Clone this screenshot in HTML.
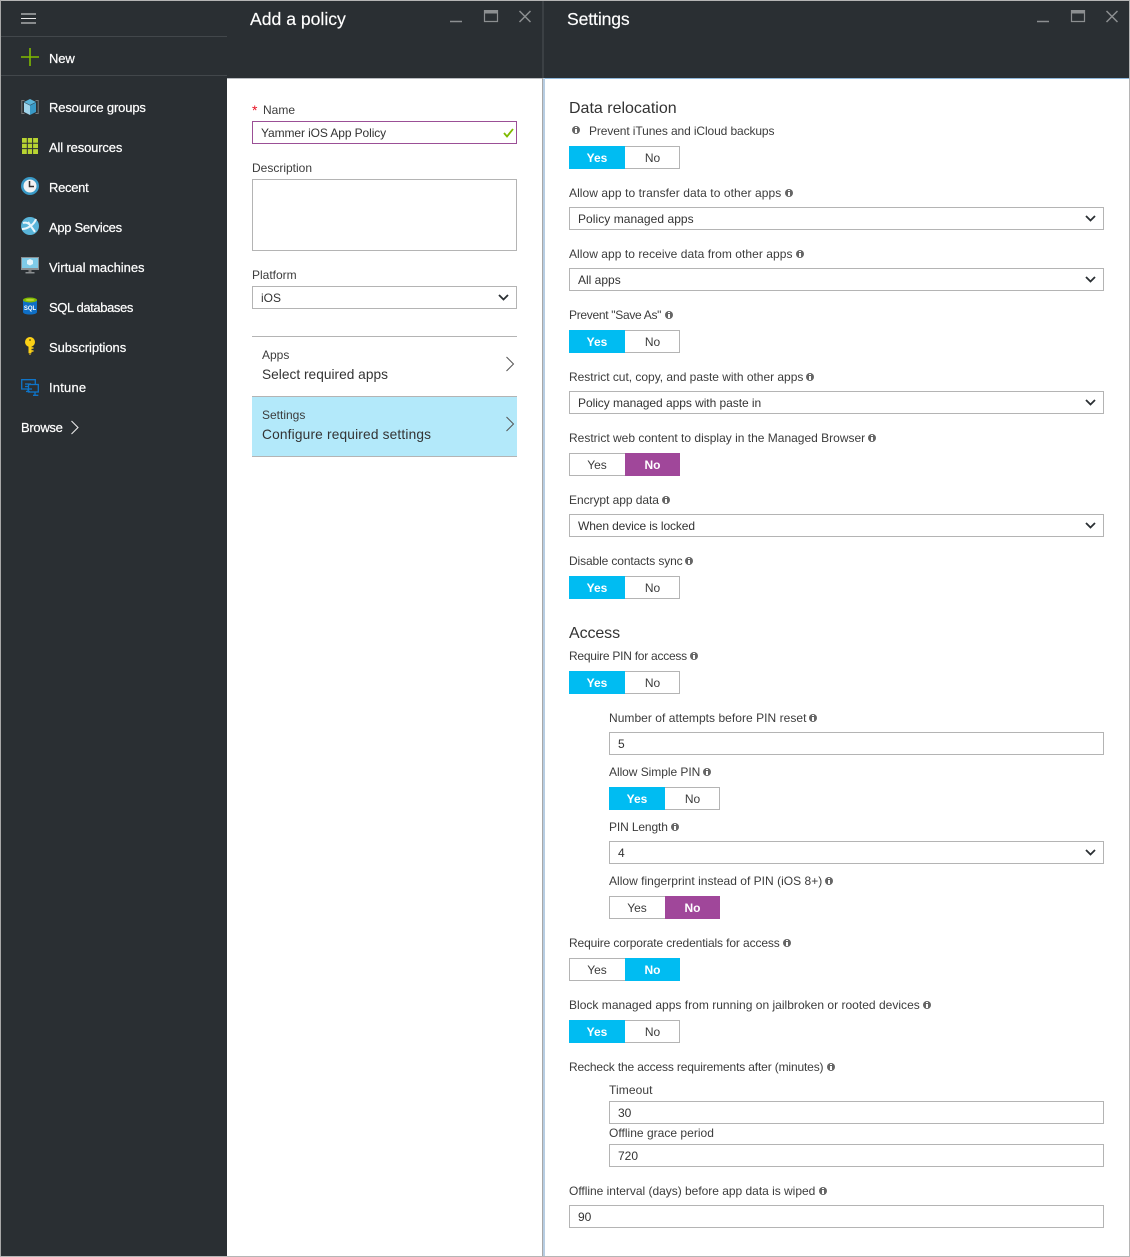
<!DOCTYPE html>
<html><head><meta charset="utf-8"><title>Settings</title>
<style>
html,body{margin:0;padding:0;background:#fff}
#p{position:relative;width:1130px;height:1257px;overflow:hidden;background:#fff;font-family:"Liberation Sans",Arial,sans-serif;font-size:12px;color:#3c3c3c}
#p div,#p span,#p svg{position:absolute}
.t{white-space:nowrap;line-height:16px}
.b{background:#2a2f33}
.n{color:#fff;font-size:13px;left:49px;-webkit-text-stroke:.2px #fff;letter-spacing:-.15px}
.h{color:#fff;font-size:17.6px;line-height:22px;white-space:nowrap;top:8px;-webkit-text-stroke:.15px #fff}
.s{color:#333;font-size:16px;line-height:20px;left:569px;white-space:nowrap}
.box{box-sizing:border-box;border:1px solid #b4b4b4;background:#fff;height:23px;line-height:23px;padding-left:8px;color:#333;white-space:nowrap}
.f1{left:569px;width:535px}.f2{left:609px;width:495px}
.tg{width:111px;height:23px;box-sizing:border-box;border:1px solid #b4b4b4;background:#fff;text-align:center}
.tg span{top:-1px;height:23px;line-height:25px;color:#3c3c3c}
.tg .a{left:-1px;width:56px}.tg .c{left:55px;width:55px}
.on{background:#00bcf2;color:#fff!important;font-weight:bold}
.pu{background:#a0479a;color:#fff!important;font-weight:bold}
.i{width:8px;height:8px;border-radius:50%;background:#666}
.i:before{content:"";position:absolute;left:3px;top:1px;width:2px;height:1px;background:#fff}
.i:after{content:"";position:absolute;left:3px;top:3px;width:2px;height:4px;background:#fff}
</style></head><body><div id="p">

<!-- dark regions -->
<div class="b" style="left:0;top:0;width:227px;height:1257px"></div>
<div class="b" style="left:227px;top:0;width:903px;height:78px"></div>
<div style="left:0;top:0;width:1130px;height:1px;background:#b5b5b5"></div>
<div style="left:0;top:0;width:1px;height:1257px;background:#a8a8a8"></div>
<div style="left:1129px;top:0;width:1px;height:1257px;background:#b5b5b5"></div>
<div style="left:0;top:1256px;width:1130px;height:1px;background:#b5b5b5"></div>
<div style="left:227px;top:78px;width:316px;height:1px;background:#b8bcc0"></div>
<div style="left:544px;top:78px;width:585px;height:1px;background:#8fb8dc"></div>
<div style="left:542px;top:1px;width:2px;height:77px;background:#3b4044"></div>
<div style="left:542px;top:78px;width:1px;height:1178px;background:#a8a8a8"></div>
<div style="left:543px;top:78px;width:2px;height:1178px;background:#b7cde2"></div>

<!-- sidebar -->
<div style="left:1px;top:36px;width:226px;height:1px;background:#42474b"></div>
<div style="left:1px;top:75px;width:226px;height:1px;background:#42474b"></div>
<svg style="left:21px;top:13px" width="15" height="11"><path d="M0 1h15M0 5.500h15M0 10h15" stroke="#e8e8e8" stroke-width="1"/></svg>
<svg style="left:21px;top:48px" width="18" height="18"><path d="M9 0v18M0 9h18" stroke="#7fba00" stroke-width="1.600"/></svg>
<div class="t n" style="top:51px">New</div>
<div class="t n" style="top:100px">Resource groups</div>
<div class="t n" style="top:140px">All resources</div>
<div class="t n" style="top:180px;letter-spacing:-.3px">Recent</div>
<div class="t n" style="top:220px;letter-spacing:-.32px">App Services</div>
<div class="t n" style="top:260px;letter-spacing:-.02px">Virtual machines</div>
<div class="t n" style="top:300px;letter-spacing:-.4px">SQL databases</div>
<div class="t n" style="top:340px;letter-spacing:-.07px">Subscriptions</div>
<div class="t n" style="top:380px;letter-spacing:.2px">Intune</div>
<div class="t n" style="top:420px;left:21px;letter-spacing:-.3px">Browse</div>
<svg style="left:70px;top:420px" width="10" height="15"><path d="M1.500 1l6.500 6.500-6.500 6.500" fill="none" stroke="#e8e8e8" stroke-width="1.100"/></svg>

<svg style="left:21px;top:98px" width="18" height="18"><path d="M3.500 2.500H.8v13h2.700M14.500 2.500h2.700v13h-2.700" fill="none" stroke="#777" stroke-width="1"/><path d="M9 1l6 3-6 3-6-3z" fill="#59b4d9"/><path d="M3 4.500l6 3V17l-6-3z" fill="#a0d4ea"/><path d="M15 4.500l-6 3V17l6-3z" fill="#3999c6"/></svg>
<svg style="left:22px;top:138px" width="16" height="16"><rect width="16" height="16" fill="#b8d432"/><path d="M5.300 0v16M10.600 0v16M0 5.300h16M0 10.600h16" stroke="#2a2f33" stroke-width="1"/></svg>
<svg style="left:21px;top:177px" width="18" height="18"><circle cx="9" cy="9" r="9" fill="#3999c6"/><circle cx="9" cy="9" r="6.500" fill="#f2f2f2"/><path d="M8.500 4v5.500H13" fill="none" stroke="#333" stroke-width="1.500"/></svg>
<svg style="left:21px;top:217px" width="18" height="18"><circle cx="9" cy="9" r="9" fill="#59b4d9"/><path d="M1 12C6 12 13 8 15 2M7 5l7 10M2 6c3-1 5 0 7 2" fill="none" stroke="#e8f5fb" stroke-width="2"/></svg>
<svg style="left:21px;top:257px" width="18" height="18"><rect width="18" height="13" fill="#8a8f92"/><rect x="1" y="1" width="16" height="10" fill="#7fcbe8"/><path d="M9 2l3 1.500v3.500L9 8.500 6 7V3.500z" fill="#e4f4fb"/><rect x="7.500" y="13" width="3" height="2" fill="#777"/><rect x="4.500" y="15" width="9" height="1.500" fill="#8a8f92"/></svg>
<svg style="left:23px;top:297px" width="14" height="18"><path d="M0 3v12c0 1.500 3 2.500 7 2.500s7-1 7-2.500V3z" fill="#0f6fc6"/><ellipse cx="7" cy="3" rx="7" ry="2.500" fill="#7fba00"/><ellipse cx="7" cy="3" rx="4.500" ry="1.300" fill="#b8d432"/><text x="7" y="13" font-size="6" font-weight="bold" text-anchor="middle" fill="#fff" font-family="Liberation Sans, sans-serif">SQL</text></svg>
<svg style="left:24px;top:337px" width="12" height="18"><circle cx="6" cy="5" r="5" fill="#fcd116"/><rect x="4.500" y="8" width="3" height="8" fill="#fcd116"/><path d="M7.500 11h2M7.500 14h2" stroke="#fcd116" stroke-width="1.500"/><path d="M4.500 16.500L6 18l1.500-1.500z" fill="#fcd116"/><circle cx="6" cy="3" r="1" fill="#7a6a10"/></svg>
<svg style="left:21px;top:379px" width="18" height="17" fill="none" stroke="#0f74c8" stroke-width="1.300"><path d="M11 10H.7V.7h13.600V5M5 12.500h4M7 10v2.500"/><rect x="7.500" y="5.500" width="9.800" height="7.500"/><path d="M12 16.300h5.300M14 13v3M4 5h6M4 7.500h3"/></svg>

<!-- window controls -->
<svg style="left:450px;top:10px" width="81" height="14" fill="none" stroke="#8c8f91"><path d="M0 11.500h12" stroke-width="1.500"/><path d="M34.500.5h13v11h-13z" stroke-width="1.200"/><rect x="34" width="14" height="3.500" fill="#8c8f91" stroke="none"/><path d="M69.500 1l11 11M80.500 1l-11 11" stroke-width="1.500"/></svg>
<svg style="left:1037px;top:10px" width="81" height="14" fill="none" stroke="#8c8f91"><path d="M0 11.500h12" stroke-width="1.500"/><path d="M34.500.5h13v11h-13z" stroke-width="1.200"/><rect x="34" width="14" height="3.500" fill="#8c8f91" stroke="none"/><path d="M69.500 1l11 11M80.500 1l-11 11" stroke-width="1.500"/></svg>

<div class="h" style="left:250px">Add a policy</div>
<div class="h" style="left:567px;letter-spacing:-.12px">Settings</div>

<!-- add a policy panel -->
<div class="t" style="left:252px;top:102px;color:#e81123;font-size:14px">*</div>
<div class="t" style="left:263px;top:102px">Name</div>
<div class="box" style="left:252px;top:121px;width:265px;border-color:#9b4f96;letter-spacing:-.1px">Yammer iOS App Policy</div>
<svg style="left:503px;top:128px" width="11" height="10"><path d="M1 5l3 3.500L10 1" fill="none" stroke="#7fba00" stroke-width="1.800"/></svg>
<div class="t" style="left:252px;top:160px">Description</div>
<div class="box" style="left:252px;top:179px;width:265px;height:72px"></div>
<div class="t" style="left:252px;top:267px">Platform</div>
<div class="box" style="left:252px;top:286px;width:265px">iOS</div>
<svg style="left:498px;top:294px" width="11" height="8"><path d="M1 1l4.500 4.500L10 1" fill="none" stroke="#2a2f33" stroke-width="1.800"/></svg>
<div style="left:252px;top:336px;width:265px;height:1px;background:#b4b4b4"></div>
<div class="t" style="left:262px;top:347px">Apps</div>
<div class="t" style="left:262px;top:367px;font-size:13.700px;color:#333;letter-spacing:.02px">Select required apps</div>
<svg style="left:505px;top:356px" width="10" height="16"><path d="M1.500 1l7 7-7 7" fill="none" stroke="#555" stroke-width="1"/></svg>
<div style="left:252px;top:396px;width:265px;height:61px;box-sizing:border-box;background:#b3e9fa;border-top:1px solid #b4b4b4;border-bottom:1px solid #b4b4b4"></div>
<div class="t" style="left:262px;top:407px">Settings</div>
<div class="t" style="left:262px;top:427px;font-size:13.700px;color:#333;letter-spacing:.18px">Configure required settings</div>
<svg style="left:505px;top:416px" width="10" height="16"><path d="M1.500 1l7 7-7 7" fill="none" stroke="#555" stroke-width="1"/></svg>

<!-- settings panel -->
<div class="s" style="top:99px">Data relocation</div>
<span class="i" style="left:572px;top:126px"></span>
<div class="t" style="left:589px;top:123px;letter-spacing:-.11px">Prevent iTunes and iCloud backups</div>
<div class="tg" style="left:569px;top:146px"><span class="a on">Yes</span><span class="c">No</span></div>

<div class="t" style="left:569px;top:185px;letter-spacing:.07px">Allow app to transfer data to other apps</div><span class="i" style="left:785px;top:189px"></span>
<div class="box f1" style="top:207px;letter-spacing:.05px">Policy managed apps</div>

<div class="t" style="left:569px;top:246px;letter-spacing:.05px">Allow app to receive data from other apps</div><span class="i" style="left:796px;top:250px"></span>
<div class="box f1" style="top:268px">All apps</div>

<div class="t" style="left:569px;top:307px;letter-spacing:-.3px">Prevent "Save As"</div><span class="i" style="left:665px;top:311px"></span>
<div class="tg" style="left:569px;top:330px"><span class="a on">Yes</span><span class="c">No</span></div>

<div class="t" style="left:569px;top:369px;letter-spacing:-.02px">Restrict cut, copy, and paste with other apps</div><span class="i" style="left:806px;top:373px"></span>
<div class="box f1" style="top:391px;letter-spacing:-.05px">Policy managed apps with paste in</div>

<div class="t" style="left:569px;top:430px">Restrict web content to display in the Managed Browser</div><span class="i" style="left:868px;top:434px"></span>
<div class="tg" style="left:569px;top:453px"><span class="a">Yes</span><span class="c pu">No</span></div>

<div class="t" style="left:569px;top:492px;letter-spacing:-.05px">Encrypt app data</div><span class="i" style="left:662px;top:496px"></span>
<div class="box f1" style="top:514px;letter-spacing:-.12px">When device is locked</div>

<div class="t" style="left:569px;top:553px;letter-spacing:-.12px">Disable contacts sync</div><span class="i" style="left:685px;top:557px"></span>
<div class="tg" style="left:569px;top:576px"><span class="a on">Yes</span><span class="c">No</span></div>

<div class="s" style="top:624px;letter-spacing:-.1px">Access</div>
<div class="t" style="left:569px;top:648px;letter-spacing:-.25px">Require PIN for access</div><span class="i" style="left:690px;top:652px"></span>
<div class="tg" style="left:569px;top:671px"><span class="a on">Yes</span><span class="c">No</span></div>

<div class="t" style="left:609px;top:710px;letter-spacing:.04px">Number of attempts before PIN reset</div><span class="i" style="left:809px;top:714px"></span>
<div class="box f2" style="top:732px">5</div>

<div class="t" style="left:609px;top:764px;letter-spacing:-.05px">Allow Simple PIN</div><span class="i" style="left:703px;top:768px"></span>
<div class="tg" style="left:609px;top:787px"><span class="a on">Yes</span><span class="c">No</span></div>

<div class="t" style="left:609px;top:819px;letter-spacing:-.13px">PIN Length</div><span class="i" style="left:671px;top:823px"></span>
<div class="box f2" style="top:841px">4</div>

<div class="t" style="left:609px;top:873px;letter-spacing:.02px">Allow fingerprint instead of PIN (iOS 8+)</div><span class="i" style="left:825px;top:877px"></span>
<div class="tg" style="left:609px;top:896px"><span class="a">Yes</span><span class="c pu">No</span></div>

<div class="t" style="left:569px;top:935px;letter-spacing:-.12px">Require corporate credentials for access</div><span class="i" style="left:783px;top:939px"></span>
<div class="tg" style="left:569px;top:958px"><span class="a">Yes</span><span class="c on">No</span></div>

<div class="t" style="left:569px;top:997px;letter-spacing:.02px">Block managed apps from running on jailbroken or rooted devices</div><span class="i" style="left:923px;top:1001px"></span>
<div class="tg" style="left:569px;top:1020px"><span class="a on">Yes</span><span class="c">No</span></div>

<div class="t" style="left:569px;top:1059px;letter-spacing:-.15px">Recheck the access requirements after (minutes)</div><span class="i" style="left:827px;top:1063px"></span>
<div class="t" style="left:609px;top:1082px;letter-spacing:.1px">Timeout</div>
<div class="box f2" style="top:1101px">30</div>
<div class="t" style="left:609px;top:1125px;letter-spacing:.02px">Offline grace period</div>
<div class="box f2" style="top:1144px">720</div>

<div class="t" style="left:569px;top:1183px;letter-spacing:-.02px">Offline interval (days) before app data is wiped</div><span class="i" style="left:819px;top:1187px"></span>
<div class="box f1" style="top:1205px">90</div>

<!-- select chevrons -->
<svg style="left:1085px;top:215px" width="11" height="8"><path d="M1 1l4.500 4.500L10 1" fill="none" stroke="#2a2f33" stroke-width="1.800"/></svg>
<svg style="left:1085px;top:276px" width="11" height="8"><path d="M1 1l4.500 4.500L10 1" fill="none" stroke="#2a2f33" stroke-width="1.800"/></svg>
<svg style="left:1085px;top:399px" width="11" height="8"><path d="M1 1l4.500 4.500L10 1" fill="none" stroke="#2a2f33" stroke-width="1.800"/></svg>
<svg style="left:1085px;top:522px" width="11" height="8"><path d="M1 1l4.500 4.500L10 1" fill="none" stroke="#2a2f33" stroke-width="1.800"/></svg>
<svg style="left:1085px;top:849px" width="11" height="8"><path d="M1 1l4.500 4.500L10 1" fill="none" stroke="#2a2f33" stroke-width="1.800"/></svg>

</div></body></html>
